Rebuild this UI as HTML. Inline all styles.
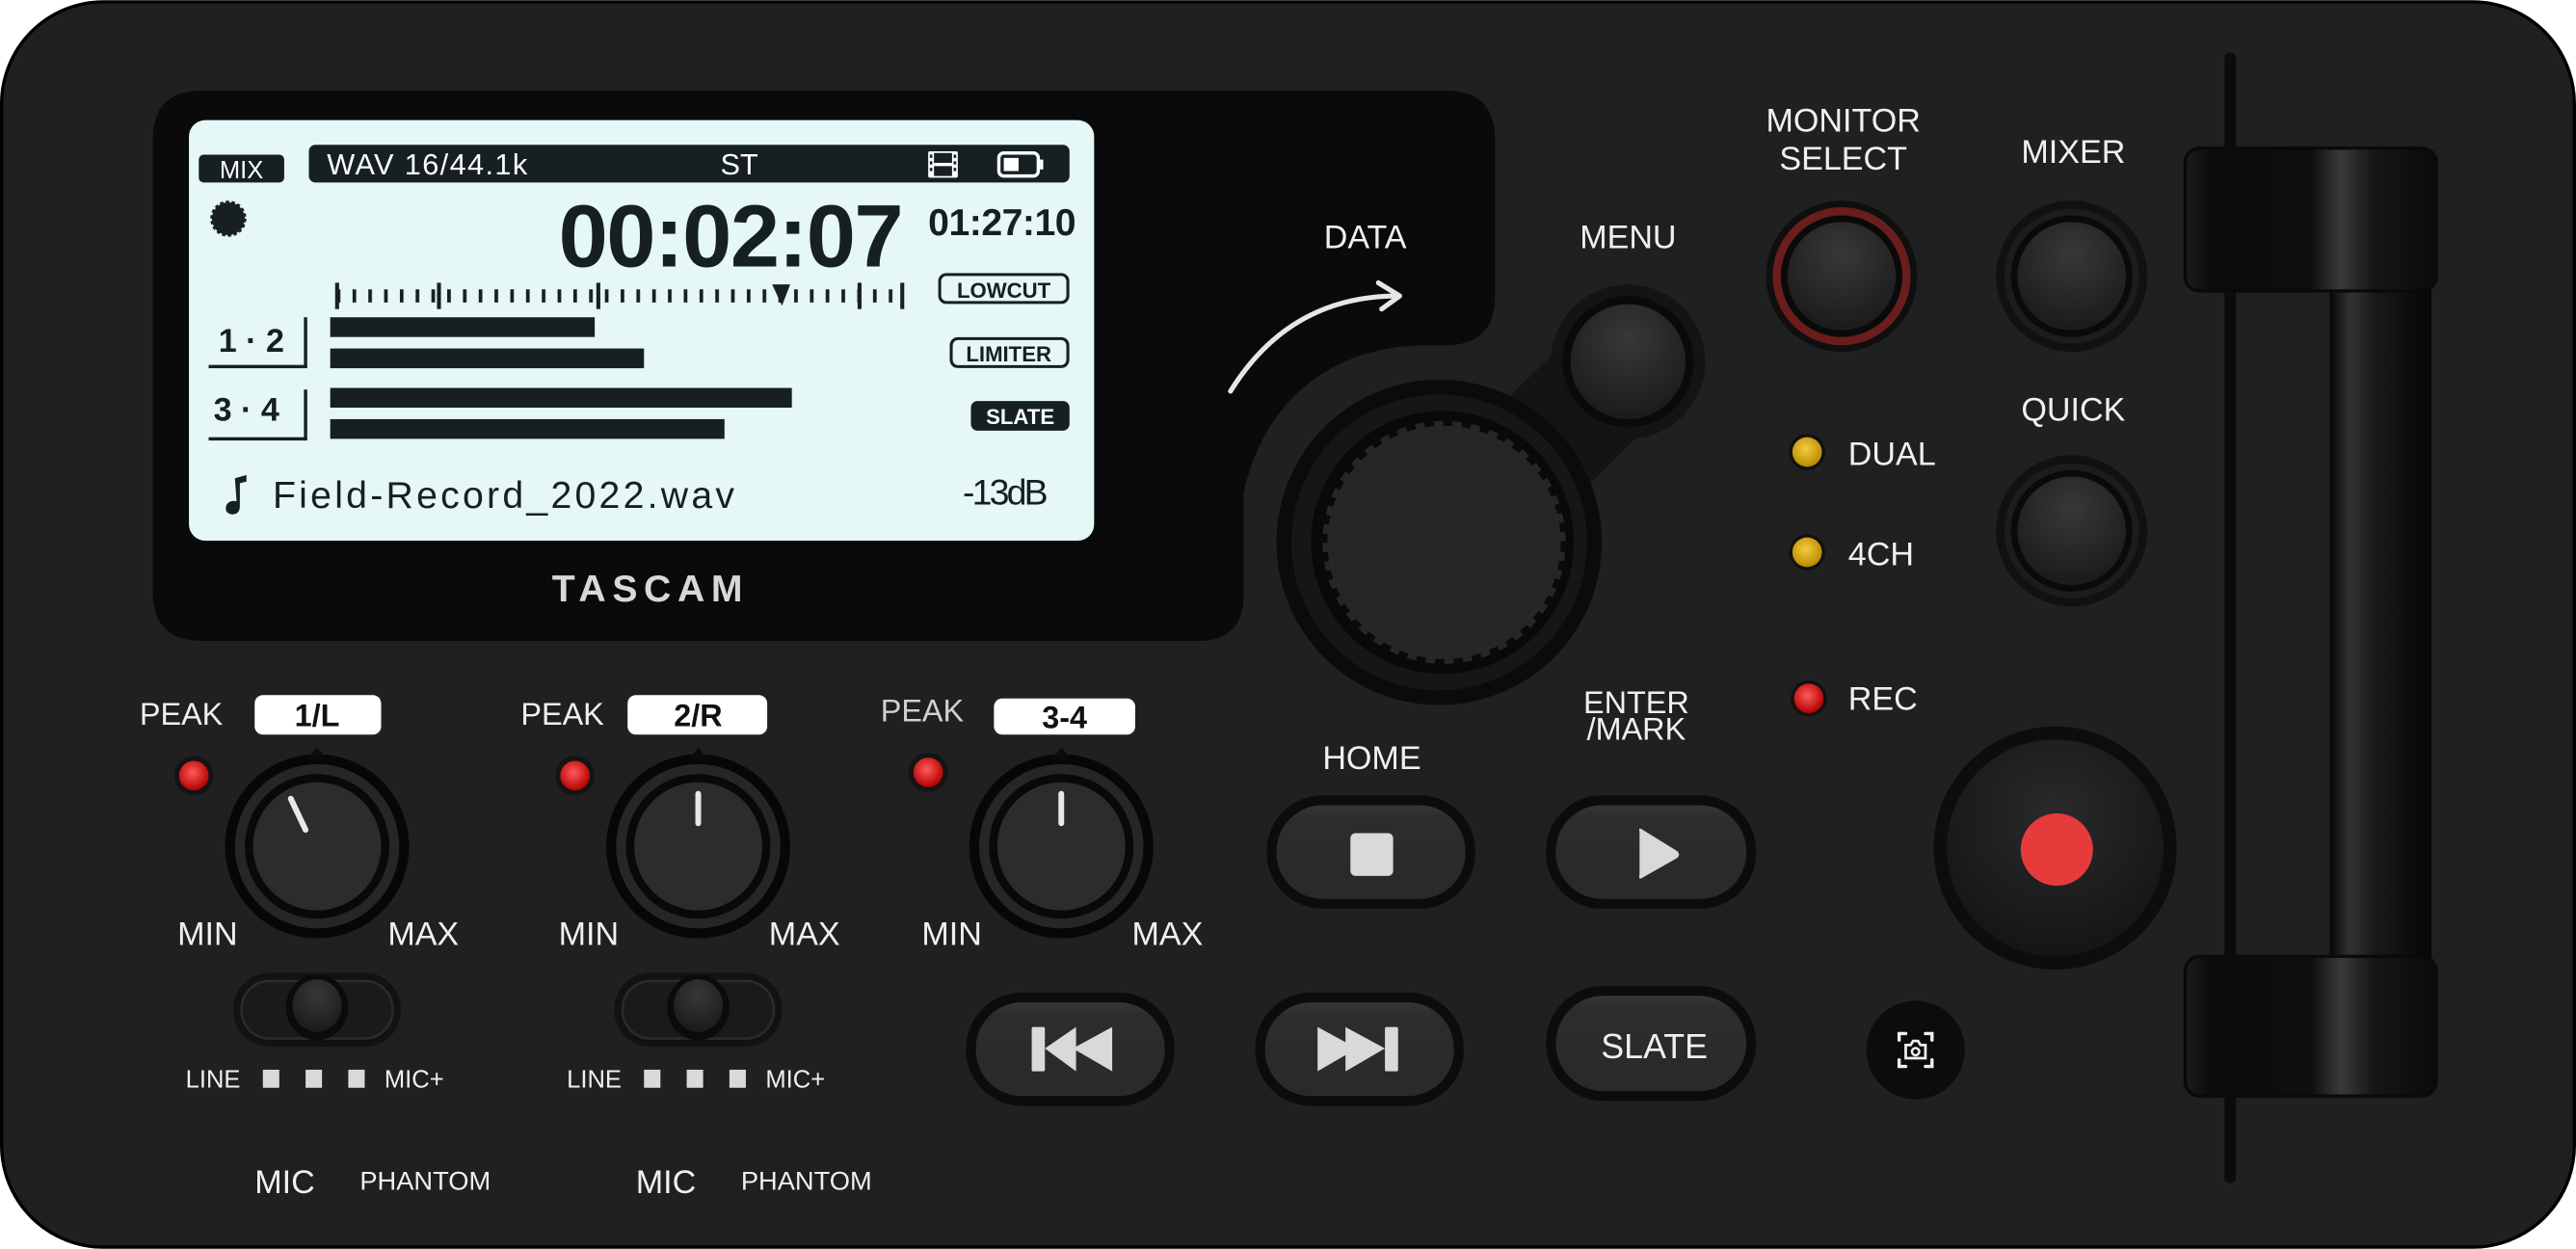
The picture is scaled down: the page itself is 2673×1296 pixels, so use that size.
<!DOCTYPE html>
<html><head><meta charset="utf-8"><style>
html,body{margin:0;padding:0;background:#fff;width:2673px;height:1296px;overflow:hidden}
svg{display:block}
text{font-family:"Liberation Sans",sans-serif}
</style></head><body>
<svg width="2673" height="1296" viewBox="0 0 1568 760" xmlns="http://www.w3.org/2000/svg">
<defs>
<radialGradient id="cap" cx="50%" cy="30%" r="70%"><stop offset="0" stop-color="#383838"/><stop offset="1" stop-color="#1b1b1b"/></radialGradient>
<radialGradient id="ledr" cx="45%" cy="40%" r="60%"><stop offset="0" stop-color="#ff5a5a"/><stop offset="1" stop-color="#b30000"/></radialGradient>
<radialGradient id="ledy" cx="45%" cy="40%" r="60%"><stop offset="0" stop-color="#f4cc40"/><stop offset="1" stop-color="#b88a00"/></radialGradient>
<linearGradient id="pill" x1="0" y1="0" x2="0" y2="1"><stop offset="0" stop-color="#363636"/><stop offset="0.15" stop-color="#2c2c2c"/><stop offset="1" stop-color="#2a2a2a"/></linearGradient>
<linearGradient id="fcap" x1="0" y1="0" x2="1" y2="0"><stop offset="0" stop-color="#1c1c1c"/><stop offset="0.1" stop-color="#0c0c0c"/><stop offset="0.5" stop-color="#0e0e0e"/><stop offset="0.62" stop-color="#3a3a3a"/><stop offset="0.75" stop-color="#161616"/><stop offset="1" stop-color="#0a0a0a"/></linearGradient>
<linearGradient id="stem" x1="0" y1="0" x2="1" y2="0"><stop offset="0" stop-color="#050505"/><stop offset="0.2" stop-color="#353232"/><stop offset="0.45" stop-color="#1a1818"/><stop offset="1" stop-color="#060606"/></linearGradient>
<radialGradient id="recb" cx="50%" cy="35%" r="65%"><stop offset="0" stop-color="#2a2a2a"/><stop offset="1" stop-color="#151515"/></radialGradient>
<pattern id="tk" x="205" y="0" width="9.6" height="20" patternUnits="userSpaceOnUse"><rect x="0" y="0" width="2.2" height="20" fill="#162022"/></pattern>
</defs>

<rect x="1" y="1" width="1566" height="758" rx="62" fill="#202020" stroke="#000" stroke-width="2"/>

<path d="M123,55 H880 Q910,55 910,85 V180 Q910,210 880,210 H868 C815,210 770,240 757,300 V362 Q757,390 729,390 H123 Q93,390 93,360 V85 Q93,55 123,55 Z" fill="#0a0a0a"/>

<rect x="115" y="73" width="551" height="256" rx="10" fill="#e5f7f7"/>
<rect x="121" y="94" width="52" height="17" rx="3" fill="#162022"/>
<text x="147" y="108.5" font-size="15" fill="#fff" text-anchor="middle">MIX</text>
<rect x="188" y="88" width="463" height="23" rx="4" fill="#162022"/>
<text x="199" y="106" font-size="18" fill="#fff" textLength="122">WAV 16/44.1k</text>
<text x="450" y="106" font-size="18" fill="#fff" text-anchor="middle">ST</text>
<rect x="565" y="92" width="18" height="16" rx="1" fill="#fff"/>
<rect x="568.5" y="93" width="11" height="14" fill="#162022"/>
<rect x="568.5" y="99" width="11" height="2" fill="#fff"/>
<g fill="#162022"><rect x="566" y="94" width="1.5" height="2"/><rect x="566" y="98" width="1.5" height="2"/><rect x="566" y="102" width="1.5" height="2"/><rect x="580.5" y="94" width="1.5" height="2"/><rect x="580.5" y="98" width="1.5" height="2"/><rect x="580.5" y="102" width="1.5" height="2"/></g>
<rect x="608" y="93" width="24" height="14" rx="3" fill="none" stroke="#fff" stroke-width="2"/><rect x="611" y="96" width="9" height="8" fill="#fff"/><rect x="633" y="97" width="2" height="6" fill="#fff"/>
<circle cx="139" cy="133" r="10" fill="#162022" stroke="#162022" stroke-width="2" stroke-dasharray="2 1.5"/>
<text x="550" y="162" font-size="54" font-weight="bold" fill="#162022" text-anchor="end" textLength="210">00:02:07</text>
<text x="655" y="143" font-size="23" font-weight="bold" fill="#162022" text-anchor="end" textLength="90">01:27:10</text>
<rect x="205" y="176" width="345" height="8" fill="url(#tk)"/>
<g fill="#162022"><rect x="204" y="172" width="2.4" height="16"/><rect x="266" y="172" width="2.4" height="16"/><rect x="363" y="172" width="2.4" height="16"/><rect x="522" y="172" width="2.4" height="16"/><rect x="548" y="172" width="2.4" height="16"/>
<path d="M470,173 L481,173 L476,186 Z"/></g>
<rect x="572" y="167" width="78" height="17" rx="4" fill="none" stroke="#162022" stroke-width="1.8"/>
<text x="611" y="181" font-size="13" font-weight="bold" fill="#162022" text-anchor="middle">LOWCUT</text>
<rect x="579" y="206" width="71" height="17" rx="4" fill="none" stroke="#162022" stroke-width="1.8"/>
<text x="614" y="220" font-size="13" font-weight="bold" fill="#162022" text-anchor="middle">LIMITER</text>
<rect x="591" y="244" width="60" height="18" rx="4" fill="#162022"/>
<text x="621" y="258" font-size="13" font-weight="bold" fill="#fff" text-anchor="middle">SLATE</text>
<text x="133" y="214" font-size="20" fill="#162022" font-weight="bold">1 · 2</text>
<text x="130" y="256" font-size="20" fill="#162022" font-weight="bold">3 · 4</text>
<g fill="#162022"><rect x="185" y="193" width="2" height="30"/><rect x="127" y="222" width="60" height="2"/><rect x="185" y="237" width="2" height="30"/><rect x="127" y="266" width="60" height="2"/>
<rect x="201" y="193" width="161" height="12"/><rect x="201" y="212" width="191" height="12"/><rect x="201" y="236" width="281" height="12"/><rect x="201" y="255" width="240" height="12"/>
<path d="M143,291 L150,289 L150,293 L146,294 L146,308 Q146,313 141,313 Q136,312 138,307 Q140,304 144,305 Z"/></g>
<text x="166" y="309" font-size="23" fill="#162022" textLength="281">Field-Record_2022.wav</text>
<text x="638" y="307" font-size="22" fill="#162022" text-anchor="end" textLength="52">-13dB</text>
<text x="394" y="366" font-size="23" font-weight="bold" fill="#d8d8d8" text-anchor="middle" textLength="116">TASCAM</text>

<text x="831" y="151" font-size="20" fill="#f0f0f0" text-anchor="middle">DATA</text>
<path d="M749,238 Q785,180 851,180" fill="none" stroke="#e6e6e6" stroke-width="3" stroke-linecap="round"/>
<path d="M839,172 L852,180 L841,188" fill="none" stroke="#e6e6e6" stroke-width="3" stroke-linecap="round" stroke-linejoin="round"/>
<text x="991" y="151" font-size="20" fill="#f0f0f0" text-anchor="middle">MENU</text>

<line x1="900" y1="310" x2="990" y2="222" stroke="#141414" stroke-width="72" stroke-linecap="round"/>
<circle cx="991" cy="220" r="47" fill="#141414"/>
<circle cx="991" cy="220" r="40" fill="#0a0a0a"/>
<circle cx="991" cy="220" r="35" fill="url(#cap)"/>
<circle cx="876" cy="330" r="99" fill="#0b0b0b"/>
<circle cx="876" cy="330" r="90" fill="#161616"/>
<circle cx="878" cy="330" r="80" fill="#090909"/>
<circle cx="879" cy="330" r="74" fill="#262626" stroke="#0a0a0a" stroke-width="6" stroke-dasharray="5.8 5.8"/>
<circle cx="879" cy="330" r="68" fill="#252525"/>

<text x="1122" y="80" font-size="20" fill="#f0f0f0" text-anchor="middle">MONITOR</text>
<text x="1122" y="103" font-size="20" fill="#f0f0f0" text-anchor="middle">SELECT</text>
<circle cx="1121" cy="168" r="46" fill="#0f0f0f"/>
<circle cx="1121" cy="168" r="42" fill="#6a1d1d"/>
<circle cx="1121" cy="168" r="37" fill="#0a0a0a"/>
<circle cx="1121" cy="168" r="33" fill="url(#cap)"/>
<text x="1262" y="99" font-size="20" fill="#f0f0f0" text-anchor="middle">MIXER</text>
<circle cx="1261" cy="168" r="46" fill="#111"/><circle cx="1261" cy="168" r="41" fill="#1c1c1c"/><circle cx="1261" cy="168" r="37" fill="#0a0a0a"/><circle cx="1261" cy="168" r="33" fill="url(#cap)"/>
<text x="1262" y="256" font-size="20" fill="#f0f0f0" text-anchor="middle">QUICK</text>
<circle cx="1261" cy="323" r="46" fill="#111"/><circle cx="1261" cy="323" r="41" fill="#1c1c1c"/><circle cx="1261" cy="323" r="37" fill="#0a0a0a"/><circle cx="1261" cy="323" r="33" fill="url(#cap)"/>
<circle cx="1100" cy="275" r="11" fill="#111"/><circle cx="1100" cy="275" r="9" fill="url(#ledy)"/>
<text x="1125" y="283" font-size="20" fill="#f0f0f0">DUAL</text>
<circle cx="1100" cy="336" r="11" fill="#111"/><circle cx="1100" cy="336" r="9" fill="url(#ledy)"/>
<text x="1125" y="344" font-size="20" fill="#f0f0f0">4CH</text>
<circle cx="1101" cy="425" r="11" fill="#111"/><circle cx="1101" cy="425" r="9" fill="url(#ledr)"/>
<text x="1125" y="432" font-size="20" fill="#f0f0f0">REC</text>

<circle cx="1251" cy="516" r="74" fill="#0d0d0d"/>
<circle cx="1251" cy="516" r="66" fill="url(#recb)"/>
<circle cx="1252" cy="517" r="22" fill="#e53b3b"/>
<circle cx="1166" cy="639" r="30" fill="#0c0c0c"/>
<g fill="none" stroke="#eee" stroke-width="2" stroke-linecap="round"><path d="M1156,633 V629 H1160 M1172,629 H1176 V633 M1176,645 V649 H1172 M1160,649 H1156 V645"/>
<path d="M1160,636 H1163 L1164.5,633.5 H1167.5 L1169,636 H1172 V644 H1160 Z" stroke-width="1.6"/><circle cx="1166" cy="640" r="2.2" stroke-width="1.5"/></g>

<text x="835" y="468" font-size="20" fill="#f0f0f0" text-anchor="middle">HOME</text>
<text x="996" y="434" font-size="19" fill="#f0f0f0" text-anchor="middle">ENTER</text>
<text x="996" y="450" font-size="19" fill="#f0f0f0" text-anchor="middle">/MARK</text>
<g>
<rect x="771" y="484" width="127" height="69" rx="34" fill="#0c0c0c"/><rect x="777" y="490" width="115" height="57" rx="28" fill="url(#pill)"/>
<rect x="941" y="484" width="128" height="69" rx="34" fill="#0c0c0c"/><rect x="947" y="490" width="116" height="57" rx="28" fill="url(#pill)"/>
<rect x="588" y="604" width="127" height="69" rx="34" fill="#0c0c0c"/><rect x="594" y="610" width="115" height="57" rx="28" fill="url(#pill)"/>
<rect x="764" y="604" width="127" height="69" rx="34" fill="#0c0c0c"/><rect x="770" y="610" width="115" height="57" rx="28" fill="url(#pill)"/>
<rect x="941" y="600" width="128" height="70" rx="35" fill="#0c0c0c"/><rect x="947" y="606" width="116" height="58" rx="29" fill="url(#pill)"/>
</g>
<g fill="#d9d9d9">
<rect x="822" y="507" width="26" height="26" rx="3"/>
<path d="M998,506 Q997,503 1000,505 L1021,518 Q1023,520 1021,522 L1000,534 Q997,536 998,532 Z"/>
<rect x="628" y="625" width="8" height="27" rx="1"/><path d="M636,638 L655,625 V652 Z M653,638 L677,625 V652 Z"/>
<path d="M802,625 L826,638 L802,652 Z M819,625 L843,638 L819,652 Z"/><rect x="843" y="625" width="8" height="27" rx="1"/>
</g>
<text x="1007" y="644" font-size="21" fill="#f0f0f0" text-anchor="middle">SLATE</text>

<g id="ch">
<text x="85" y="441" font-size="19" fill="#f0f0f0">PEAK</text>
<circle cx="118" cy="472" r="12" fill="#141414"/><circle cx="118" cy="472" r="9" fill="url(#ledr)"/>
<circle cx="193" cy="515" r="56" fill="#070707"/>
<path d="M187,462 L193,455 L199,462 Z" fill="#0b0b0b"/>
<circle cx="193" cy="515" r="50" fill="#262626"/>
<circle cx="193" cy="515" r="44" fill="#090909"/>
<circle cx="193" cy="515" r="39" fill="#2c2c2c"/>
<text x="108" y="575" font-size="20" fill="#f0f0f0">MIN</text>
<text x="236" y="575" font-size="20" fill="#f0f0f0">MAX</text>
<rect x="142" y="592" width="102" height="45" rx="22" fill="#121212"/>
<rect x="147" y="597" width="92" height="35" rx="17" fill="#1a1a1a" stroke="#2b2b2b" stroke-width="1.5"/>
<ellipse cx="193" cy="613" rx="19" ry="20" fill="#0b0b0b"/><ellipse cx="193" cy="612" rx="15" ry="16" fill="url(#cap)"/>
<text x="113" y="662" font-size="15" fill="#f0f0f0">LINE</text>
<g fill="#d9d9d9"><rect x="160" y="651" width="10" height="11"/><rect x="186" y="651" width="10" height="11"/><rect x="212" y="651" width="10" height="11"/></g>
<text x="234" y="662" font-size="15" fill="#f0f0f0">MIC+</text>
<text x="155" y="726" font-size="20" fill="#f0f0f0">MIC</text>
<text x="219" y="724" font-size="16" fill="#f0f0f0">PHANTOM</text>
</g>
<use href="#ch" x="232"/>
<text x="536" y="439" font-size="19" fill="#d0d0d0">PEAK</text>
<circle cx="565" cy="470" r="12" fill="#141414"/><circle cx="565" cy="470" r="9" fill="url(#ledr)"/>
<circle cx="646" cy="515" r="56" fill="#070707"/>
<path d="M640,462 L646,455 L652,462 Z" fill="#0b0b0b"/>
<circle cx="646" cy="515" r="50" fill="#262626"/><circle cx="646" cy="515" r="44" fill="#090909"/><circle cx="646" cy="515" r="39" fill="#2c2c2c"/>
<text x="561" y="575" font-size="20" fill="#f0f0f0">MIN</text>
<text x="689" y="575" font-size="20" fill="#f0f0f0">MAX</text>
<rect x="155" y="423" width="77" height="24" rx="5" fill="#fff"/><text x="193" y="442" font-size="19" font-weight="bold" fill="#111" text-anchor="middle">1/L</text>
<rect x="382" y="423" width="85" height="24" rx="5" fill="#fff"/><text x="425" y="442" font-size="19" font-weight="bold" fill="#111" text-anchor="middle">2/R</text>
<rect x="605" y="425" width="86" height="22" rx="5" fill="#fff"/><text x="648" y="443" font-size="19" font-weight="bold" fill="#111" text-anchor="middle">3-4</text>
<g stroke="#e8e8e8" stroke-width="3.5" stroke-linecap="round">
<line x1="177" y1="486" x2="186" y2="505"/>
<line x1="425" y1="483" x2="425" y2="501"/>
<line x1="646" y1="483" x2="646" y2="501"/>
</g>

<rect x="1354" y="32" width="7" height="688" rx="3" fill="#0c0c0c"/>
<rect x="1418" y="170" width="62" height="420" fill="url(#stem)"/>
<rect x="1330" y="90" width="153" height="87" rx="9" fill="url(#fcap)" stroke="#0a0a0a" stroke-width="2"/>
<rect x="1330" y="582" width="153" height="85" rx="9" fill="url(#fcap)" stroke="#0a0a0a" stroke-width="2"/>
</svg>
</body></html>
